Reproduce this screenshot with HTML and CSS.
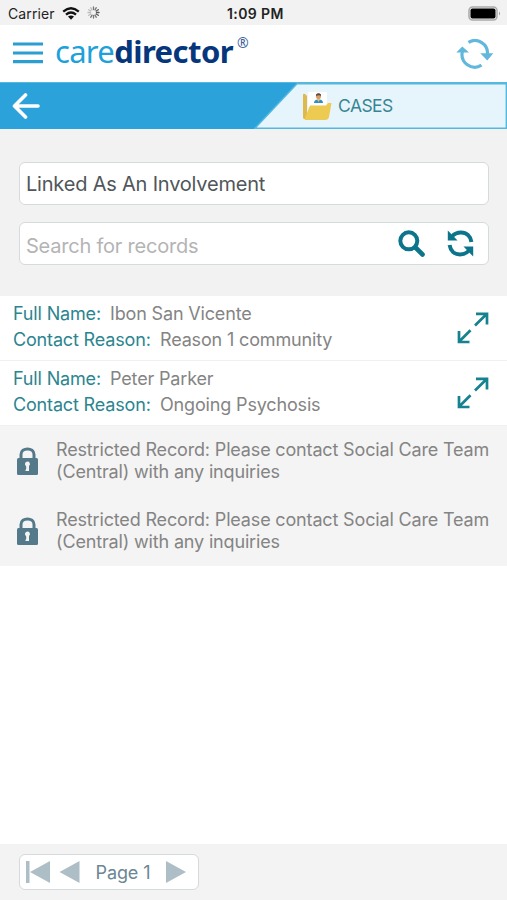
FILE: index.html
```html
<!DOCTYPE html>
<html lang="en">
<head>
<meta charset="utf-8">
<title>Cases</title>
<link rel="stylesheet" href="styles.css">
</head>
<body>
<div class="status">
  <span class="carrier">Carrier</span>
  <svg class="wifi" width="18" height="13" viewBox="0 0 18 13"><g fill="none" stroke="#111" stroke-width="2.3"><path d="M1.2 4.6Q9-2 16.8 4.6"/><path d="M4 7.6Q9 3.4 14 7.6"/></g><path d="M6 9.6Q9 7.400 12 9.600L9 12.700Z" fill="#111"/></svg>
  <svg class="spinner" width="13" height="13" viewBox="-6.500 -6.500 13 13" stroke-width="1.300" stroke-linecap="round"><path d="M0-3V-5.500M1.500-2.600L2.800-4.800" stroke="#777"/><path d="M2.600-1.500L4.800-2.800M3 0H5.500M2.600 1.500L4.800 2.800" stroke="#555"/><path d="M1.500 2.600L2.800 4.800M0 3V5.500M-1.500 2.600L-2.800 4.800" stroke="#777"/><path d="M-2.600 1.500L-4.800 2.800M-3 0H-5.500M-2.600-1.500L-4.800-2.800M-1.500-2.600L-2.800-4.800" stroke="#bbb"/></svg>
  <span class="time">1:09 PM</span>
  <svg class="battery" width="33" height="15" viewBox="0 0 33 15"><rect x="1" y="1" width="28" height="13" rx="3.500" fill="#eee" stroke="#aaa" stroke-width="1.500"/><rect x="2.500" y="2.500" width="25" height="10" rx="2" fill="#000"/><path d="M31 5.500Q33 7.500 31 9.500Z" fill="#999"/></svg>
</div>
<header class="header">
  <svg class="menu" width="30" height="22" viewBox="0 0 30 22"><path d="M0 2H30M0 11H30M0 19.700H30" stroke="#2c9fd0" stroke-width="3.200"/></svg>
  <div class="logo"><span class="care">care</span><span class="director">director</span><sup class="reg">®</sup></div>
  <svg class="sync" width="38" height="30" viewBox="0 0 38 30"><g fill="none" stroke="#62b8dc" stroke-width="3.200"><path d="M12.500 3.300A12.700 12.700 0 0 1 31.500 15.500"/><path d="M25.500 26.200A12.700 12.700 0 0 1 6.400 12.500"/></g><path d="M24.300 14.300H37.300L31.300 21.500ZM.3 13.600L6.300 7.500L13 13.600Z" fill="#62b8dc"/></svg>
</header>
<nav class="nav">
  <svg class="back" width="28" height="26" viewBox="0 0 28 26"><path d="M13.500 2L2.500 13L13.500 24M3 13H26" fill="none" stroke="#fff" stroke-width="3.600" stroke-linecap="round" stroke-linejoin="round"/></svg>
  <div class="tab">
    <svg class="shape" width="253" height="46" viewBox="0 0 253 46"><path d="M1 45.300L43 .7H252.300V45.300Z" fill="#e6f5fc" stroke="#55b8df" stroke-width="1.400"/></svg>
    <div class="tab-content">
    <svg width="29" height="29" viewBox="0 0 29 29"><path d="M0 3Q0 1 2 2L4 4V27H1Q0 27 0 25Z" fill="#dfb94b"/><path d="M5 1Q5 0 6 0H23Q24 0 24 1V15H5Z" fill="#fff"/><path d="M2 26L7 13.500H23L25 11H28.500L26 25Q25.500 28 22 28H3Q1 28 2 26Z" fill="#edca51"/><path d="M11 11Q11 8 14 7.500H17Q20 8 20 11Z" fill="#2d91c2"/><path d="M14.300 6H16.700V8L15.500 10L14.300 8Z" fill="#f2b577"/><rect x="13" y="1.500" width="5" height="5.500" rx="2.300" fill="#d89b61"/><path d="M13 4V2.500Q15.500 0 18 2.500V4Q16 2.500 13 4Z" fill="#594d43"/></svg>
    <span class="tab-label">CASES</span>
    </div>
  </div>
</nav>
<section class="filters">
  <div class="field"><span class="view">Linked As An Involvement</span></div>
  <div class="field search"><span class="hint">Search for records</span>
    <svg class="magnifier" width="27" height="27" viewBox="0 0 27 27"><circle cx="10.800" cy="10.800" r="8.500" fill="none" stroke="#0d758b" stroke-width="4"/><path d="M17.500 17.500L24.500 24.500" stroke="#0d758b" stroke-width="4.600" stroke-linecap="round"/></svg>
    <svg width="27" height="27" viewBox="0 0 27 27"><g fill="none" stroke="#0d758b" stroke-width="4"><path d="M5 6.500Q8.500 2.600 14 2.600C19.500 2.600 23.500 6 24.400 12"/><path d="M22 20.500Q18.500 24.400 13 24.400C7.500 24.400 3.500 21 2.600 15"/></g><path d="M.8.500L3.800 3.500L10.500 10.500H.8ZM26.200 26.500V16.500H16.500L22.500 22.800Z" fill="#0d758b"/></svg>
  </div>
</section>
<main class="records">
  <article class="record">
    <div class="details"><div class="line"><span class="key k1">Full Name:</span><span>Ibon San Vicente</span></div><div class="line"><span class="key k2">Contact Reason:</span><span>Reason 1 community</span></div></div>
    <svg width="32" height="32" viewBox="0 0 32 32"><path d="M18 13.500L29.700 2M19 1.800H30V12.500M13.500 18.300L2 29.800M2 19V30H12.500" fill="none" stroke="#16818f" stroke-width="2.700"/></svg>
  </article>
  <article class="record">
    <div class="details"><div class="line"><span class="key k1">Full Name:</span><span>Peter Parker</span></div><div class="line"><span class="key k2">Contact Reason:</span><span>Ongoing Psychosis</span></div></div>
    <svg width="32" height="32" viewBox="0 0 32 32"><path d="M18 13.500L29.700 2M19 1.800H30V12.500M13.500 18.300L2 29.800M2 19V30H12.500" fill="none" stroke="#16818f" stroke-width="2.700"/></svg>
  </article>
  <article class="restricted">
    <svg width="21" height="28" viewBox="0 0 21 28"><path d="M4 12V7.500C4 0 17 0 17 7.500V12" fill="none" stroke="#54798a" stroke-width="3"/><rect y="11" width="21" height="17" rx="1.500" fill="#54798a"/><path d="M8 17.500A2.500 2.500 0 1 1 12 19V24H8.500V23L9.200 22V19.500Z" fill="#f4f4f4"/></svg>
    <p>Restricted Record: Please contact Social Care Team<br>(Central) with any inquiries</p>
  </article>
  <article class="restricted">
    <svg width="21" height="28" viewBox="0 0 21 28"><path d="M4 12V7.500C4 0 17 0 17 7.500V12" fill="none" stroke="#54798a" stroke-width="3"/><rect y="11" width="21" height="17" rx="1.500" fill="#54798a"/><path d="M8 17.500A2.500 2.500 0 1 1 12 19V24H8.500V23L9.200 22V19.500Z" fill="#f4f4f4"/></svg>
    <p>Restricted Record: Please contact Social Care Team<br>(Central) with any inquiries</p>
  </article>
</main>
<footer class="footer">
  <div class="pager">
    <svg width="54" height="22" viewBox="0 0 54 22"><path d="M0 0H3.500V22H0ZM24 0V22L4 11ZM53.500 0V22L33.500 11Z" fill="#aebec7"/></svg>
    <span class="page">Page 1</span>
    <svg width="20" height="22" viewBox="0 0 20 22"><path d="M0 0L20 11L0 22Z" fill="#aebec7"/></svg>
  </div>
</footer>
</body>
</html>
```

FILE: styles.css
```css
* { box-sizing: border-box; }
body { margin: 0; height: 900px; display: flex; flex-direction: column; overflow: hidden; background: #fff; font-family: Inter, "Liberation Sans", sans-serif; font-size: 18px; letter-spacing: -.16px; color: #848484; white-space: nowrap; }
svg { display: block; flex: none; }
.status { height: 25px; flex: none; background: #f2f2f2; display: grid; grid-template-columns: 54px 25px 140px 1fr auto; align-items: center; padding: 2px 6px 0 8px; color: #222; font-size: 14px; line-height: 20px; }
.carrier { letter-spacing: .1px; }
.wifi { margin-top: -1px; }
.spinner { margin-top: -2px; }
.battery { margin-top: -1px; }
.time { font-weight: 600; font-size: 14px; letter-spacing: .4px; }
.header { height: 57px; flex: none; display: flex; align-items: center; padding: 0 13px 0 13px; }
.menu { margin-top: -1px; }
.logo { font-family: "Noto Sans", sans-serif; font-size: 31px; line-height: 40px; display: flex; margin: -5px 0 0 12px; color: #06377c; }
.care { color: #1da1da; letter-spacing: -.7px; }
.director { font-weight: 700; letter-spacing: -.55px; }
.reg { font-size: 14px; line-height: 14px; margin: 5px 0 0 4px; color: #3c6299; }
.sync { margin-left: auto; }
.nav { height: 47px; flex: none; background: #2ba3da; display: flex; align-items: center; padding-left: 12px; border-top: 1px solid #55b8df; }
.tab { width: 253px; height: 46px; margin-left: auto; display: grid; }
.shape, .tab-content { grid-area: 1 / 1; }
.tab-content { display: flex; padding: 9px 0 0 49px; }
.tab-label { color: #388492; margin-left: 6px; line-height: 27px; font-size: 17.500px; letter-spacing: -.55px; }
.filters { height: 167px; flex: none; background: #f2f2f2; padding: 33px 18px 0 19px; display: flex; flex-direction: column; gap: 17px; }
.field { height: 43px; background: #fff; border: 1.500px solid #d5dadd; border-radius: 6px; padding: 0 14px 0 6px; display: flex; align-items: center; font-size: 20px; color: #50565a; }
.view { letter-spacing: -.2px; }
.search { color: #b4b4b4; }
.hint { padding-top: 4px; letter-spacing: -.22px; }
.magnifier { margin: 0 22px 0 auto; }
.record { height: 65px; display: flex; align-items: center; justify-content: space-between; padding: 0 18px 0 13px; border-bottom: 1px solid #f0f0f0; }
.line { line-height: 26px; display: flex; }
.details { margin-top: -2px; }
.key { color: #2b8590; flex: none; }
.k1 { width: 97px; }
.k2 { width: 147px; }
.restricted { height: 70px; background: #f4f4f4; display: flex; align-items: center; padding: 0 0 1px 17px; }
.restricted p { margin: 0 0 0 18px; line-height: 21.500px; }
.footer { height: 56px; flex: none; margin-top: auto; background: #f3f3f3; padding: 10px 19px; }
.pager { width: 180px; height: 36px; background: #fff; border: 1.500px solid #d5dadd; border-radius: 6px; padding: 0 12px 0 6px; display: flex; justify-content: space-between; align-items: center; color: #6b8694; }
.page { letter-spacing: -.1px; }
```
